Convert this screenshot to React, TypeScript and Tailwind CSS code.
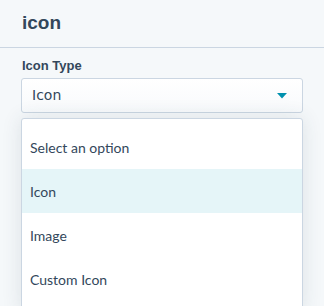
import { useState } from "react";

const options = ["Select an option", "Icon", "Image", "Custom Icon"];

export default function App() {
  const [value, setValue] = useState("Icon");

  return (
    <div className="w-[324px] h-[306px] overflow-hidden bg-[#f5f8fa] text-[#33475b]">
      {/* Header */}
      <div className="h-[48px] border-b border-[#cbd6e2] px-[22px] pt-[11px]">
        <h1 className="font-['Liberation_Sans',sans-serif] text-[19px] leading-[24px] font-bold">icon</h1>
      </div>

      {/* Field */}
      <div className="px-[21px] pt-[10px]">
        <label className="block pl-px font-['Liberation_Sans',sans-serif] text-[13px] leading-[16px] font-bold mb-[4px]">
          Icon Type
        </label>
        <div className="relative">
          <button className="w-[282px] h-[35px] flex items-center justify-between pl-[10px] pr-[15px] rounded-[3px] border border-[#cbd6e2] bg-gradient-to-b from-white to-[#f8fafc] font-['DejaVu_Sans',sans-serif] text-[14px]">
            <span>{value}</span>
            <svg width="10" height="6" viewBox="0 0 10 6">
              <path d="M0 0h10L5 5.5z" fill="#0091ae" />
            </svg>
          </button>

          {/* Open menu */}
          <div className="absolute left-0 top-[40px] w-[282px] rounded-t-[3px] border border-[#cbd6e2] bg-white pt-[6px] pb-[10px] shadow-[0_0_20px_rgba(45,62,80,0.12)]">
            {options.map((opt) => (
              <div
                key={opt}
                onClick={() => setValue(opt)}
                className={
                  "h-[44px] flex items-center pl-[8px] font-['Lato',sans-serif] text-[14px] " +
                  (opt === value ? "bg-[#e5f5f8]" : "")
                }
              >
                {opt}
              </div>
            ))}
          </div>
        </div>
      </div>
    </div>
  );
}
